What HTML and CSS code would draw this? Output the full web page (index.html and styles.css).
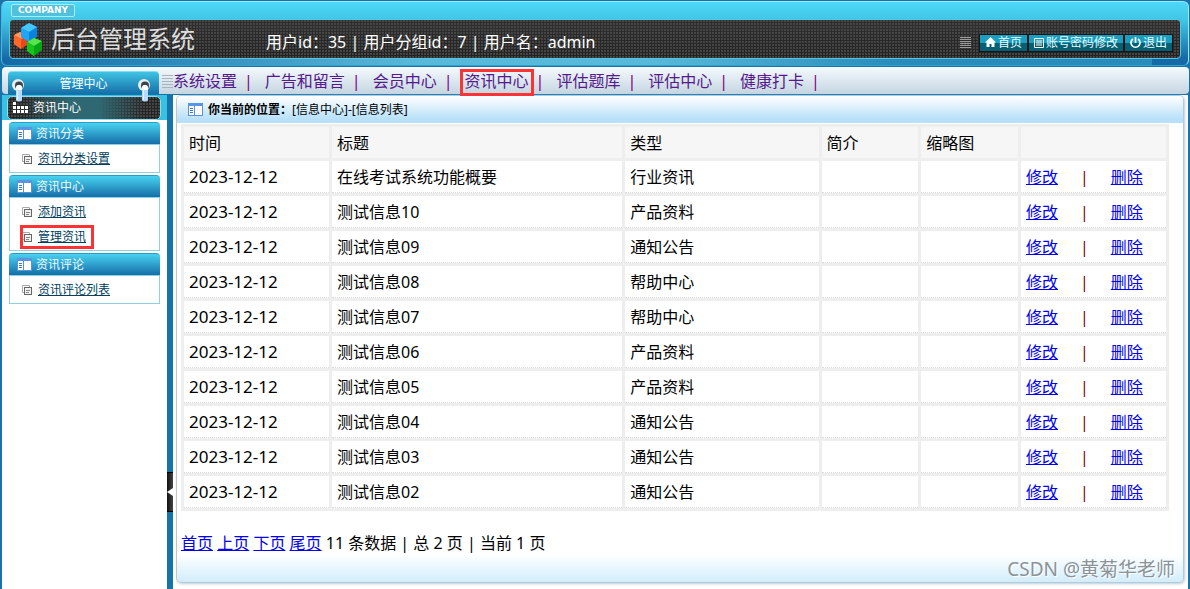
FILE: index.html
```html
<!DOCTYPE html>
<html lang="zh-CN">
<head>
<meta charset="utf-8">
<title>后台管理系统</title>
<link rel="stylesheet" href="styles.css">
</head>
<body>
<svg class="sprite" aria-hidden="true">
  <symbol id="i-panel" viewBox="0 0 15 13"><rect x=".5" y=".5" width="14" height="12" fill="#fff" stroke="#5b8fd8"/><path d="M0 0h15v3H0z" fill="#5b95e2"/><path d="M6.500 3v10" stroke="#5b8fd8"/><path d="M2 5.500h3M2 7.500h3M2 9.500h3" stroke="#3a78c4"/><path d="M8 4h6v7H8z" fill="#fff"/></symbol>
  <symbol id="i-copy" viewBox="0 0 10 10"><path d="M.5 7.500v-7h7v2" fill="none" stroke="#aaa"/><path d="M.5 7.500h2" stroke="#aaa"/><rect x="2.500" y="2.500" width="7" height="7" fill="#f0f0f0" stroke="#666"/><path d="M4 5.500h4M4 7.500h3" stroke="#888"/></symbol>
  <symbol id="i-hook" viewBox="0 0 14 24"><circle cx="6" cy="6" r="6" fill="#e6eef2"/><circle cx="7" cy="6.500" r="4" fill="#3d4549"/><path d="M4 9a3 3 0 0 1 6 0v12.500q-3 2-6 0z" fill="#b5dcff"/><path d="M4 11V9a3 3 0 0 1 6 0v2z" fill="#fff"/><path d="M5.500 10v11" stroke="#e9f6ff"/></symbol>
</svg>

<header class="top">
  <div class="company">COMPANY</div>
  <div class="banner">
    <svg class="logo" viewBox="0 0 28 33" aria-hidden="true">
      <path d="M0 12l6-3 7 4v9l-6 4-7-5z" fill="#e8491a"/><path d="M0 12l6-3 7 4-6 3z" fill="#ff9a5c"/><path d="M0 12l7 4v10l-7-5z" fill="#ff6a2a"/>
      <path d="M7 5l8-5 8 4v10l-8 5-8-5z" fill="#0a83e0"/><path d="M7 5l8-5 8 4-8 5z" fill="#43c7ff"/><path d="M7 5l8 4v10l-8-5z" fill="#1fa5f7"/>
      <path d="M13 19l7-4 8 3v9l-8 6-7-5z" fill="#06a514"/><path d="M13 19l7-4 8 3-8 5z" fill="#56e44f"/><path d="M13 19l7 4v10l-7-5z" fill="#16c51b"/>
    </svg>
    <h1>后台管理系统</h1>
    <p class="user">用户id：35 | 用户分组id：7 | 用户名：admin</p>
    <span class="grip dark"></span>
    <nav class="tools">
      <a href="#"><svg width="11" height="11" viewBox="0 0 11 11"><path d="M5.500 0L0 5.500h1.500V10H4.500V7h2v3h3V5.500H11z" fill="#fff"/></svg>首页</a>
      <a href="#"><svg width="10" height="10" viewBox="0 0 10 10"><path d="M.5.5h9v9h-9zM2 3h6M2 5h6M2 7h6" fill="none" stroke="#fff"/></svg>账号密码修改</a>
      <a href="#"><svg width="11" height="12" viewBox="0 0 11 12"><path d="M3 2a4.500 4.500 0 1 0 5 0M5.500 0v6" fill="none" stroke="#fff" stroke-width="1.700"/></svg>退出</a>
    </nav>
  </div>
</header>

<div class="bar">
  <div class="tab">管理中心
    <svg class="hook left" aria-hidden="true"><use href="#i-hook"/></svg>
    <svg class="hook right" aria-hidden="true"><use href="#i-hook"/></svg>
  </div>
  <span class="grip"></span>
  <nav class="menu">
    <a href="#">系统设置</a><i>|</i>
    <a href="#">广告和留言</a><i>|</i>
    <a href="#">会员中心</a><i>|</i>
    <a href="#" class="marked">资讯中心</a><i>|</i>
    <a href="#">评估题库</a><i>|</i>
    <a href="#">评估中心</a><i>|</i>
    <a href="#">健康打卡</a><i>|</i>
  </nav>
</div>

<div class="work">
  <aside class="side">
    <div class="current"><div class="plate">
      <svg width="16" height="12" viewBox="0 0 16 12" aria-hidden="true"><path d="M0 0h3v3H0zM0 4h3v3H0zM4 4h3v3H4zM8 4h3v3H8zM12 4h3v3h-3zM0 8h3v3H0zM4 8h3v3H4zM8 8h3v3H8zM12 8h3v3h-3z" fill="#fff"/></svg>资讯中心</div></div>
    <section class="group">
      <h2><svg class="panel-icon"><use href="#i-panel"/></svg>资讯分类</h2>
      <ul><li><svg class="copy-icon"><use href="#i-copy"/></svg><a href="#">资讯分类设置</a></li></ul>
    </section>
    <section class="group">
      <h2><svg class="panel-icon"><use href="#i-panel"/></svg>资讯中心</h2>
      <ul><li><svg class="copy-icon"><use href="#i-copy"/></svg><a href="#">添加资讯</a></li>
      <li><span class="marked-item"><svg class="copy-icon"><use href="#i-copy"/></svg><a href="#">管理资讯</a></span></li></ul>
    </section>
    <section class="group">
      <h2><svg class="panel-icon"><use href="#i-panel"/></svg>资讯评论</h2>
      <ul><li><svg class="copy-icon"><use href="#i-copy"/></svg><a href="#">资讯评论列表</a></li></ul>
    </section>
  </aside>
  <div class="splitter"><button type="button" aria-label="收起"><svg width="6" height="8" viewBox="0 0 6 8"><path d="M6 0v8L0 4z" fill="#fff"/></svg></button></div>
  <main class="main">
    <div class="sheet">
      <div class="crumb"><svg class="panel-icon"><use href="#i-panel"/></svg><b>你当前的位置：</b><span>[信息中心]-[信息列表]</span></div>
      <div class="content">
        <table>
          <colgroup><col class="w15"><col class="w30"><col class="w20"><col class="w10"><col class="w10"><col class="w15"></colgroup>
          <thead><tr><th>时间</th><th>标题</th><th>类型</th><th>简介</th><th>缩略图</th><th></th></tr></thead>
          <tbody>
            <tr><td>2023-12-12</td><td>在线考试系统功能概要</td><td>行业资讯</td><td></td><td></td><td><div class="acts"><a href="#">修改</a><i>|</i><a href="#">删除</a></div></td></tr>
            <tr><td>2023-12-12</td><td>测试信息10</td><td>产品资料</td><td></td><td></td><td><div class="acts"><a href="#">修改</a><i>|</i><a href="#">删除</a></div></td></tr>
            <tr><td>2023-12-12</td><td>测试信息09</td><td>通知公告</td><td></td><td></td><td><div class="acts"><a href="#">修改</a><i>|</i><a href="#">删除</a></div></td></tr>
            <tr><td>2023-12-12</td><td>测试信息08</td><td>帮助中心</td><td></td><td></td><td><div class="acts"><a href="#">修改</a><i>|</i><a href="#">删除</a></div></td></tr>
            <tr><td>2023-12-12</td><td>测试信息07</td><td>帮助中心</td><td></td><td></td><td><div class="acts"><a href="#">修改</a><i>|</i><a href="#">删除</a></div></td></tr>
            <tr><td>2023-12-12</td><td>测试信息06</td><td>产品资料</td><td></td><td></td><td><div class="acts"><a href="#">修改</a><i>|</i><a href="#">删除</a></div></td></tr>
            <tr><td>2023-12-12</td><td>测试信息05</td><td>产品资料</td><td></td><td></td><td><div class="acts"><a href="#">修改</a><i>|</i><a href="#">删除</a></div></td></tr>
            <tr><td>2023-12-12</td><td>测试信息04</td><td>通知公告</td><td></td><td></td><td><div class="acts"><a href="#">修改</a><i>|</i><a href="#">删除</a></div></td></tr>
            <tr><td>2023-12-12</td><td>测试信息03</td><td>通知公告</td><td></td><td></td><td><div class="acts"><a href="#">修改</a><i>|</i><a href="#">删除</a></div></td></tr>
            <tr><td>2023-12-12</td><td>测试信息02</td><td>通知公告</td><td></td><td></td><td><div class="acts"><a href="#">修改</a><i>|</i><a href="#">删除</a></div></td></tr>
          </tbody>
        </table>
        <p class="pager"><a href="#">首页</a> <a href="#">上页</a> <a href="#">下页</a> <a href="#">尾页</a> 11 条数据 | 总 2 页 | 当前 1 页</p>
      </div>
      <div class="watermark">CSDN @黄菊华老师</div>
    </div>
  </main>
</div>
</body>
</html>
```

FILE: styles.css
```css
* { box-sizing: border-box; }
body {
  margin: 0;
  min-height: 100vh;
  display: flex;
  flex-direction: column;
  background: #1873aa;
  font: 16px/24px "Noto Sans", "Noto Sans CJK SC", sans-serif;
  color: #000;
}
h1, h2, p, ul { margin: 0; padding: 0; font-weight: normal; }
ul { list-style: none; }
i { font-style: normal; }
.sprite { position: absolute; width: 0; height: 0; }

/* header */
.top {
  margin: 1px 1px 0 1px;
  height: 65px;
  padding: 2px 7px 0;
  border: 1px solid #9be8fa;
  border-bottom-color: #2ba5cf;
  border-left-color: #4fb5dc;
  border-radius: 6px;
  background:
    linear-gradient(90deg, #1569a600, #5ab8d8 35%, #5ab8d8 55%, #2b8cbc 75%, #2b8cbc 97%, #1569a600 97%) 0 100% / 100% 6px no-repeat,
    linear-gradient(#4ed8f7, #40c4e4 30%, #1569a6 90%);
}
.company {
  width: 64px;
  height: 13px;
  margin: 0 0 2px 2px;
  border: 1px solid #a5eefb;
  border-radius: 2px;
  background: #50c0dc;
  color: #fff;
  font: bold 9px/11px "DejaVu Sans", sans-serif;
  text-align: center;
}
.banner {
  display: flex;
  align-items: center;
  height: 40px;
  padding: 0 7px 0 4px;
  border: 1px solid #4cc8e2;
  border-radius: 4px;
  background:
    radial-gradient(circle at 1px 1px, #454545 0 1px, transparent 1px) 0 0 / 3px 3px,
    linear-gradient(#303030, #222);
}
.logo { width: 28px; height: 33px; }
.banner h1 {
  margin-left: 9px;
  font-size: 24px;
  color: #dedede;
}
.user { margin-left: 71px; padding-top: 5px; color: #fff; flex: 1; white-space: nowrap; }
.grip {
  width: 11px;
  height: 13px;
  background: repeating-linear-gradient(#aab4bc 0 1px, transparent 1px 3px);
}
.grip.dark {
  margin: 7px 8px 0 0;
  height: 11px;
  background: repeating-linear-gradient(#9a9a9a 0 1px, transparent 1px 2px);
}
.tools { display: flex; padding-top: 7px; }
.tools a {
  display: flex;
  align-items: center;
  gap: 2px;
  height: 18px;
  padding: 0 5px;
  border: 1px solid #151515;
  background: linear-gradient(#1a9fc0 50%, #066073 50%);
  color: #e6faff;
  font-size: 12px;
  line-height: 16px;
  text-decoration: none;
  white-space: nowrap;
}

/* menu bar */
.bar {
  display: flex;
  align-items: flex-end;
  height: 27px;
  margin: 1px 1px 1px 2px;
  padding-left: 6px;
  border-radius: 4px;
  background: linear-gradient(#f5fafe, #c4d5e1);
}
.tab {
  position: relative;
  width: 151px;
  height: 23px;
  border-top: 1px solid #7be0f5;
  border-radius: 4px 4px 0 0;
  background: linear-gradient(#3ec3e3, #156ea8);
  color: #fff;
  font-size: 12px;
  text-align: center;
}
.hook { position: absolute; top: 7px; width: 14px; height: 24px; z-index: 2; }
.hook.left { left: 4px; }
.hook.right { right: 7px; }
.bar .grip { margin: 0 0 6px 3px; }
.menu { display: flex; height: 25px; white-space: nowrap; }
.menu a { position: relative; color: #551a8b; text-decoration: none; }
.menu i { margin: 0 12px 0 7px; color: #800080; }
.menu i:last-child { margin-right: 0; }
.menu .marked::after {
  content: "";
  position: absolute;
  inset: 0 -5px -2px;
  border: 3px solid #fa3434;
  z-index: 3;
}

/* work area */
.work { flex: 1; display: flex; margin: 0 2px; }
.side { width: 165px; background: #fff; font-size: 12px; }
.current { padding: 1px 6px 0 5px; background: #38c2e2; }
.plate {
  display: flex;
  align-items: center;
  gap: 4px;
  height: 24px;
  padding-left: 5px;
  border: 1px solid #8edcf0;
  border-radius: 5px;
  background:
    linear-gradient(90deg, transparent 10%, #2f6872 40%, #2f6872 60%, transparent 90%),
    radial-gradient(circle at 1px 1px, #454545 0 1px, transparent 1px) 0 0 / 3px 3px,
    #242424;
  color: #fff;
}
.group { margin: 2px 7px 0; }
.group h2 {
  display: flex;
  align-items: center;
  gap: 4px;
  height: 22px;
  padding-left: 8px;
  border-top: 1px solid #2b9cc2;
  border-radius: 4px 4px 0 0;
  background: linear-gradient(#48d2f0, #156ea8);
  color: #eefaff;
  font-size: 12px;
}
.panel-icon { width: 15px; height: 13px; flex: none; }
.group ul { padding: 1px 0; border: 1px solid #8fcfe2; }
.group li { display: flex; align-items: center; height: 25px; padding-left: 12px; }
.copy-icon { width: 10px; height: 10px; margin-right: 6px; flex: none; }
.group a { color: #003e5c; }
.marked-item {
  position: relative;
  display: flex;
  align-items: center;
}
.marked-item::after {
  content: "";
  position: absolute;
  inset: 0 -8px 0 -2px;
  border: 3px solid #fa3434;
}
.splitter { width: 6px; padding-top: 377px; }
.splitter button {
  display: flex;
  align-items: center;
  width: 6px;
  height: 40px;
  padding: 0;
  border: 1px solid #000;
  border-width: 1px 0;
  background: linear-gradient(90deg, #111, #444);
}
.main { flex: 1; display: flex; padding: 0 4px 6px 3px; background: #fff; min-width: 0; }
.sheet {
  position: relative;
  flex: 1;
  min-width: 0;
  border: 1px solid #a5cfe8;
  border-left-color: #c4c4c4;
  border-radius: 5px;
  background: linear-gradient(#fff0, #d2edfc) 0 100% / 100% 28px no-repeat;
  box-shadow: 1px 1px 3px #c8c8c8;
}
.crumb {
  display: flex;
  align-items: center;
  height: 27px;
  padding-left: 11px;
  border-radius: 4px 4px 0 0;
  background: linear-gradient(#fff, #b8e1f9 85%);
  font-size: 12px;
}
.crumb .panel-icon { margin-right: 5px; }
.content { padding: 1px 14px 0 4px; }
table {
  width: 100%;
  table-layout: fixed;
  border-spacing: 3px;
  background: #eee;
}
.w10 { width: 10%; }
.w15 { width: 15%; }
.w20 { width: 20%; }
.w30 { width: 30%; }
th, td { padding: 0 5px; text-align: left; font-weight: normal; white-space: nowrap; }
th { height: 31px; background: #f6f6f6; }
td { height: 32px; background: #fff; border-bottom: 1px dotted #ddd; }
td:first-child { font-size: 17px; }
.acts { display: flex; gap: 22px; }
.acts i { color: #800000; }
.content a { color: #00e; }
.pager { padding: 20px 0 27px; }
.watermark {
  position: absolute;
  right: 8px;
  bottom: 1px;
  color: #8b9399;
  font-size: 19px;
  text-shadow: 1px 1px 0 #fff;
}
```
